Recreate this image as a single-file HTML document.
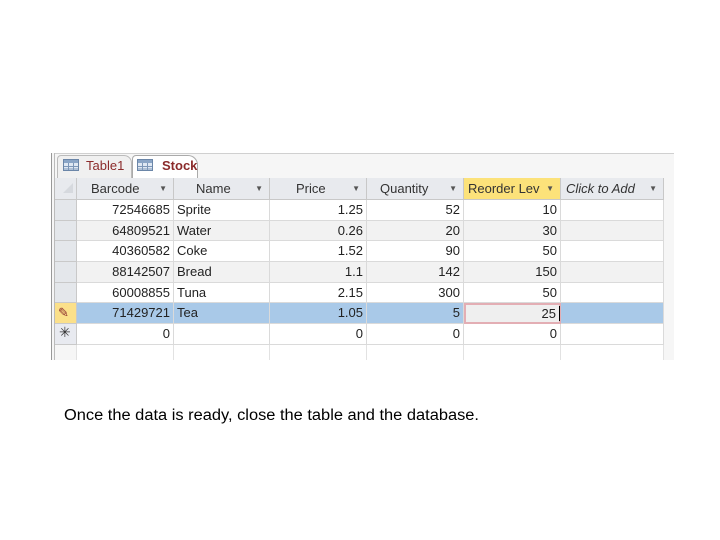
<!DOCTYPE html>
<html><head><meta charset="utf-8"><style>
body{margin:0;width:720px;height:540px;background:#fff;position:relative;overflow:hidden;font-family:"Liberation Sans",sans-serif}
.a{position:absolute}
.c{position:absolute;font-size:13px;color:#222;box-sizing:border-box;border-right:1px solid #dadada;border-bottom:1px solid #dadada;white-space:nowrap}
.r{text-align:right;padding-right:3px}
.l{padding-left:3px}
.h{position:absolute;top:178px;height:22px;font-size:13px;color:#333;line-height:21px;background:#e8eaee;border-right:1px solid #c8c8c8;border-bottom:1px solid #c8c8c8;box-sizing:border-box}
.h span{position:absolute;right:6px;top:0;font-size:8px;color:#555}
.sel{position:absolute;left:55px;width:22px;background:#e4e7eb;border-bottom:1px solid #c9c9c9;border-right:1px solid #c9c9c9;box-sizing:border-box}
</style></head><body>
<div class="a" style="left:51px;top:153px;width:623px;height:207px;background:#f6f6f6"></div>
<div class="a" style="left:51px;top:153px;width:1px;height:207px;background:#999"></div>
<div class="a" style="left:54px;top:153px;width:1px;height:207px;background:#bbb"></div>
<div class="a" style="left:55px;top:153px;width:619px;height:1px;background:#d0d0d0"></div>
<div class="a" style="left:57px;top:155px;width:73px;height:22px;background:#f0f0f0;border:1px solid #bbb;border-bottom:none;border-radius:4px 8px 0 0"></div>
<div class="a" style="left:132px;top:155px;width:64px;height:24px;background:#fff;border:1px solid #aaa;border-bottom:none;border-radius:4px 10px 0 0"></div>
<svg class="a" style="left:63px;top:159px" width="16" height="12"><rect x=".5" y=".5" width="15" height="11" fill="#dfe8f3" stroke="#6b86a8"/><rect x="1" y="1" width="14" height="3" fill="#8aa5c6"/><path d="M1 7.5H15M1 10H15M5.5 4V11M10.5 4V11" stroke="#7d97b8"/></svg>
<svg class="a" style="left:137px;top:159px" width="16" height="12"><rect x=".5" y=".5" width="15" height="11" fill="#dfe8f3" stroke="#6b86a8"/><rect x="1" y="1" width="14" height="3" fill="#8aa5c6"/><path d="M1 7.5H15M1 10H15M5.5 4V11M10.5 4V11" stroke="#7d97b8"/></svg>
<div class="a" style="left:86px;top:158px;font-size:13px;color:#8b2b2b">Table1</div>
<div class="a" style="left:162px;top:158px;font-size:13px;color:#8b2b2b;font-weight:bold">Stock</div>
<div class="sel" style="top:178px;height:22px;background:#e8eaee"></div>
<svg class="a" style="left:62px;top:182px" width="12" height="12"><path d="M11 1V11H1Z" fill="#d6d9de"/></svg>
<div class="h" style="left:77px;width:97px;padding-left:14px">Barcode<span>▼</span></div>
<div class="h" style="left:174px;width:96px;padding-left:22px">Name<span>▼</span></div>
<div class="h" style="left:270px;width:97px;padding-left:26px">Price<span>▼</span></div>
<div class="h" style="left:367px;width:97px;padding-left:13px">Quantity<span>▼</span></div>
<div class="h" style="left:464px;width:97px;padding-left:4px;background:#fce27a">Reorder Lev<span>▼</span></div>
<div class="h" style="left:561px;width:103px;padding-left:5px;font-style:italic">Click to Add<span>▼</span></div>
<div class="a" style="left:77px;top:345px;width:587px;height:15px;background:#fff"></div>
<div id="rows"></div>
<script>
var d=[["72546685","Sprite","1.25","52","10"],["64809521","Water","0.26","20","30"],["40360582","Coke","1.52","90","50"],["88142507","Bread","1.1","142","150"],["60008855","Tuna","2.15","300","50"],["71429721","Tea","1.05","5","25"],["0","","0","0","0"]];
var T=[200,221,241,262,283,303,324,345];
var L=[77,174,270,367,464,561],W=[97,96,97,97,97,103],h='';
for(var i=0;i<7;i++){var t=T[i],hh=T[i+1]-t,bg=i==5?'#a9c9e8':(i%2?'#f2f2f2':'#fff');
h+='<div class="sel" style="top:'+t+'px;height:'+hh+'px;'+(i==5?'background:#fbe08a':i==6?'background:#e8eaf0':'')+'"></div>';
for(var j=0;j<6;j++){var v=j<5?d[i][j]:'';var cl=j==1?'l':'r';var st='line-height:'+(hh-1)+'px;';
if(i==5&&j==4)st='background:#efefef;border:2px solid #e3aeb4;line-height:'+(hh-4)+'px;';
h+='<div class="c '+cl+'" style="left:'+L[j]+'px;top:'+t+'px;width:'+W[j]+'px;height:'+hh+'px;background:'+bg+';'+st+'">'+v+'</div>';}}
h+='<div class="a" style="left:58px;top:305px;font-size:13px;color:#8b2b2b">✎</div><div class="a" style="left:59px;top:324px;font-size:14px;color:#333">✳</div>';
h+='<div class="a" style="left:559px;top:306px;width:1px;height:15px;background:#000"></div>';
[77,174,270,367,464,561,664].forEach(function(x){h+='<div class="a" style="left:'+(x-1)+'px;top:345px;width:1px;height:15px;background:#e2e2e2"></div>';});
document.getElementById('rows').innerHTML=h;
</script>
<svg class="a" style="left:60px;top:402px" width="440" height="24"><text x="4" y="18" font-family="Liberation Sans,sans-serif" font-size="15.5" fill="#000" textLength="415" lengthAdjust="spacingAndGlyphs">Once the data is ready, close the table and the database.</text></svg>
</body></html>
